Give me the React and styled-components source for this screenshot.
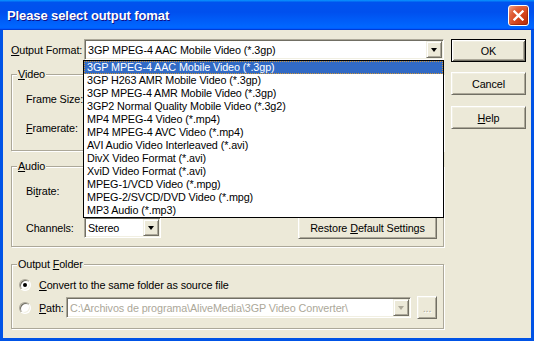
import React from 'react';
import styled, { createGlobalStyle } from 'styled-components';

const Global = createGlobalStyle`
  html, body { margin: 0; padding: 0; background: #ffffff; }
  body { font-family: "Liberation Sans", Arial, sans-serif; font-size: 11px; }
  #root { width: 534px; height: 341px; }
`;

const Window = styled.div`
  width: 534px;
  height: 341px;
  display: flex;
  flex-direction: column;
  overflow: hidden;
  font-family: "Liberation Sans", Arial, sans-serif;
  font-size: 10.8px;
  letter-spacing: -0.1px;
  color: #000;
`;

const TitleBar = styled.div`
  height: 30px;
  flex: none;
  display: flex;
  align-items: center;
  justify-content: space-between;
  padding: 0 5px 0 7px;
  background: linear-gradient(180deg, #0997ff, #0053ee 8%, #0050ee 40%, #0066ff 88%, #0066ff 93%, #005bff 95%, #003dd7 96%, #003dd7);
`;

const Title = styled.span`
  color: #fff;
  font-family: "Liberation Sans", Arial, sans-serif;
  font-weight: bold;
  font-size: 13px;
  letter-spacing: -0.1px;
  text-shadow: 1px 1px #0f1089;
  padding-top: 1px;
`;

const CloseButton = styled.div`
  width: 21px;
  height: 21px;
  box-sizing: border-box;
  border: 1px solid #fff;
  border-radius: 3px;
  display: flex;
  align-items: center;
  justify-content: center;
  background: radial-gradient(circle at 85% 85%, #c0310c 0%, #d8481f 45%, #e0623c 70%, #f0a48a 100%);
  box-shadow: inset -1px -1px 1px rgba(120, 20, 0, 0.5);
`;

const Frame = styled.div`
  flex: 1;
  display: flex;
  border-style: solid;
  border-color: #0053e6;
  border-width: 0 3px 3px 3px;
`;

const Body = styled.div`
  flex: 1;
  background: #ece9d8;
  display: flex;
  gap: 7px;
  padding: 9px 0 0 8px;
`;

const LeftCol = styled.div`
  width: 433px;
  display: flex;
  flex-direction: column;
`;

const RightCol = styled.div`
  width: 75px;
  display: flex;
  flex-direction: column;
`;

const U = styled.span`
  text-decoration: underline;
`;

const Row = styled.div`
  display: flex;
  align-items: center;
  height: ${p => p.$h}px;
  margin-top: ${p => p.$mt || 0}px;
`;

const FieldLabel = styled.span`
  width: ${p => p.$w}px;
  flex: none;
  white-space: nowrap;
`;

const ComboWrap = styled.div`
  position: relative;
`;

const Combo = styled.div`
  width: ${p => p.$w}px;
  height: 21px;
  box-sizing: border-box;
  flex: none;
  display: flex;
  align-items: center;
  background: #fff;
  border: 1px solid;
  border-color: #aca899 #fff #fff #aca899;
  box-shadow: inset 1px 1px #716f64, inset -1px -1px #f1efe2;
  padding: 0 1px 0 2px;
  color: ${p => (p.$disabled ? '#aca899' : '#000')};
`;

const ComboText = styled.span`
  flex: 1;
  white-space: nowrap;
  overflow: hidden;
  padding-left: 1px;
`;

const DropButton = styled.div`
  width: 16px;
  height: 17px;
  box-sizing: border-box;
  flex: none;
  display: flex;
  align-items: center;
  justify-content: center;
  background: #ece9d8;
  border: 1px solid;
  border-color: #f1efe2 #716f64 #716f64 #f1efe2;
  box-shadow: inset 1px 1px #fff, inset -1px -1px #aca899;
`;

const Arrow = styled.span`
  width: 0;
  height: 0;
  border-left: 3.5px solid transparent;
  border-right: 3.5px solid transparent;
  border-top: 4px solid ${p => (p.$disabled ? '#aca899' : '#000')};
  margin-top: 1px;
`;

const DropList = styled.div`
  position: absolute;
  left: -1px;
  top: 21px;
  width: 361px;
  box-sizing: border-box;
  border: 1px solid #000;
  background: #fff;
  z-index: 5;
`;

const ListItem = styled.div`
  height: 13px;
  line-height: 13px;
  padding-left: 3px;
  white-space: nowrap;
  background: ${p => (p.$sel ? '#316ac5' : 'transparent')};
  color: ${p => (p.$sel ? '#fff' : '#000')};
  outline: ${p => (p.$sel ? '1px dotted #ce953a' : 'none')};
  outline-offset: -1px;
`;

const Group = styled.div`
  height: ${p => p.$h}px;
  margin-top: ${p => p.$mt}px;
  box-sizing: border-box;
  border: 1px solid #aca899;
  box-shadow: 1px 1px 0 #fff, inset 1px 1px 0 #fff;
  display: flex;
  flex-direction: column;
  padding: 0 6px 0 ${p => p.$pl}px;
`;

const Legend = styled.div`
  width: fit-content;
  margin: -7px 0 0 ${p => 5 - p.$pl}px;
  padding: 0 1px;
  line-height: 13px;
  height: 13px;
  background: #ece9d8;
  white-space: nowrap;
`;

const Button = styled.div`
  width: ${p => p.$w}px;
  height: 23px;
  box-sizing: border-box;
  flex: none;
  margin-top: ${p => p.$mt || 0}px;
  margin-left: ${p => (p.$ml === 'auto' ? 'auto' : `${p.$ml || 0}px`)};
  display: flex;
  align-items: center;
  justify-content: center;
  background: #ece9d8;
  white-space: nowrap;
  color: ${p => (p.$disabled ? '#aca899' : '#000')};
  text-shadow: ${p => (p.$disabled ? '1px 1px #fff' : 'none')};
  border: 1px solid;
  border-color: ${p => (p.$default ? '#000' : '#fff #716f64 #716f64 #fff')};
  box-shadow: ${p =>
    p.$default
      ? 'inset 1px 1px #fff, inset -1px -1px #716f64, inset 2px 2px #f1efe2, inset -2px -2px #aca899'
      : 'inset 1px 1px #f1efe2, inset -1px -1px #aca899'};
`;

const Radio = styled.span`
  width: 12px;
  height: 12px;
  box-sizing: border-box;
  flex: none;
  border-radius: 50%;
  border: 1px solid;
  border-color: #aca899 #fff #fff #aca899;
  box-shadow: inset 1px 1px #716f64, inset -1px -1px #f1efe2;
  background: #fff;
  display: flex;
  align-items: center;
  justify-content: center;
  margin-right: 8px;
`;

const Dot = styled.span`
  width: 4px;
  height: 4px;
  border-radius: 50%;
  background: #000;
`;

const formats = [
  '3GP MPEG-4 AAC Mobile Video (*.3gp)',
  '3GP H263 AMR Mobile Video (*.3gp)',
  '3GP MPEG-4 AMR Mobile Video (*.3gp)',
  '3GP2 Normal Quality Mobile Video (*.3g2)',
  'MP4 MPEG-4 Video (*.mp4)',
  'MP4 MPEG-4 AVC Video (*.mp4)',
  'AVI Audio Video Interleaved (*.avi)',
  'DivX Video Format (*.avi)',
  'XviD Video Format (*.avi)',
  'MPEG-1/VCD Video (*.mpg)',
  'MPEG-2/SVCD/DVD Video (*.mpg)',
  'MP3 Audio (*.mp3)',
];

export default function App() {
  return (
    <>
      <Global />
      <Window>
        <TitleBar>
          <Title>Please select output fomat</Title>
          <CloseButton>
            <svg width="11" height="11" viewBox="0 0 11 11">
              <path d="M1.5 1.5 L9.5 9.5 M9.5 1.5 L1.5 9.5" stroke="#fff" strokeWidth="2.3" strokeLinecap="square" />
            </svg>
          </CloseButton>
        </TitleBar>
        <Frame>
          <Body>
            <LeftCol>
              <Row $h={21}>
                <FieldLabel $w={73}><U>O</U>utput Format:</FieldLabel>
                <ComboWrap>
                  <Combo $w={360}>
                    <ComboText>3GP MPEG-4 AAC Mobile Video (*.3gp)</ComboText>
                    <DropButton><Arrow /></DropButton>
                  </Combo>
                  <DropList>
                    {formats.map((f, i) => (
                      <ListItem key={f} $sel={i === 0}>{f}</ListItem>
                    ))}
                  </DropList>
                </ComboWrap>
              </Row>

              <Group $h={77} $mt={14} $pl={14}>
                <Legend $pl={14}><U>V</U>ideo</Legend>
                <Row $h={21} $mt={7}>
                  <FieldLabel $w={58}>Frame Size:</FieldLabel>
                  <Combo $w={150}><ComboText /><DropButton><Arrow /></DropButton></Combo>
                </Row>
                <Row $h={21} $mt={8}>
                  <FieldLabel $w={58}><U>F</U>ramerate:</FieldLabel>
                  <Combo $w={77}><ComboText /><DropButton><Arrow /></DropButton></Combo>
                </Row>
              </Group>

              <Group $h={81} $mt={15} $pl={14}>
                <Legend $pl={14}><U>A</U>udio</Legend>
                <Row $h={21} $mt={7}>
                  <FieldLabel $w={58}>Bi<U>t</U>rate:</FieldLabel>
                  <Combo $w={77}><ComboText /><DropButton><Arrow /></DropButton></Combo>
                </Row>
                <Row $h={23} $mt={15}>
                  <FieldLabel $w={58}>Channels:</FieldLabel>
                  <Combo $w={77}>
                    <ComboText>Stereo</ComboText>
                    <DropButton><Arrow /></DropButton>
                  </Combo>
                  <Button $w={139} $ml="auto">Restore&nbsp;<U>D</U>efault Settings</Button>
                </Row>
              </Group>

              <Group $h={65} $mt={17} $pl={7}>
                <Legend $pl={7}>Output <U>F</U>older</Legend>
                <Row $h={17} $mt={5}>
                  <Radio><Dot /></Radio>
                  <span><U>C</U>onvert to the same folder as source file</span>
                </Row>
                <Row $h={23} $mt={3}>
                  <Radio />
                  <FieldLabel $w={27}><U>P</U>ath:</FieldLabel>
                  <Combo $w={345} $disabled>
                    <ComboText>C:\Archivos de programa\AliveMedia\3GP Video Converter\</ComboText>
                    <DropButton><Arrow $disabled /></DropButton>
                  </Combo>
                  <Button $w={20} $ml={6} $disabled>...</Button>
                </Row>
              </Group>
            </LeftCol>

            <RightCol>
              <Button $w={75} $default>OK</Button>
              <Button $w={75} $mt={10}>Cancel</Button>
              <Button $w={75} $mt={11}><U>H</U>elp</Button>
            </RightCol>
          </Body>
        </Frame>
      </Window>
    </>
  );
}
